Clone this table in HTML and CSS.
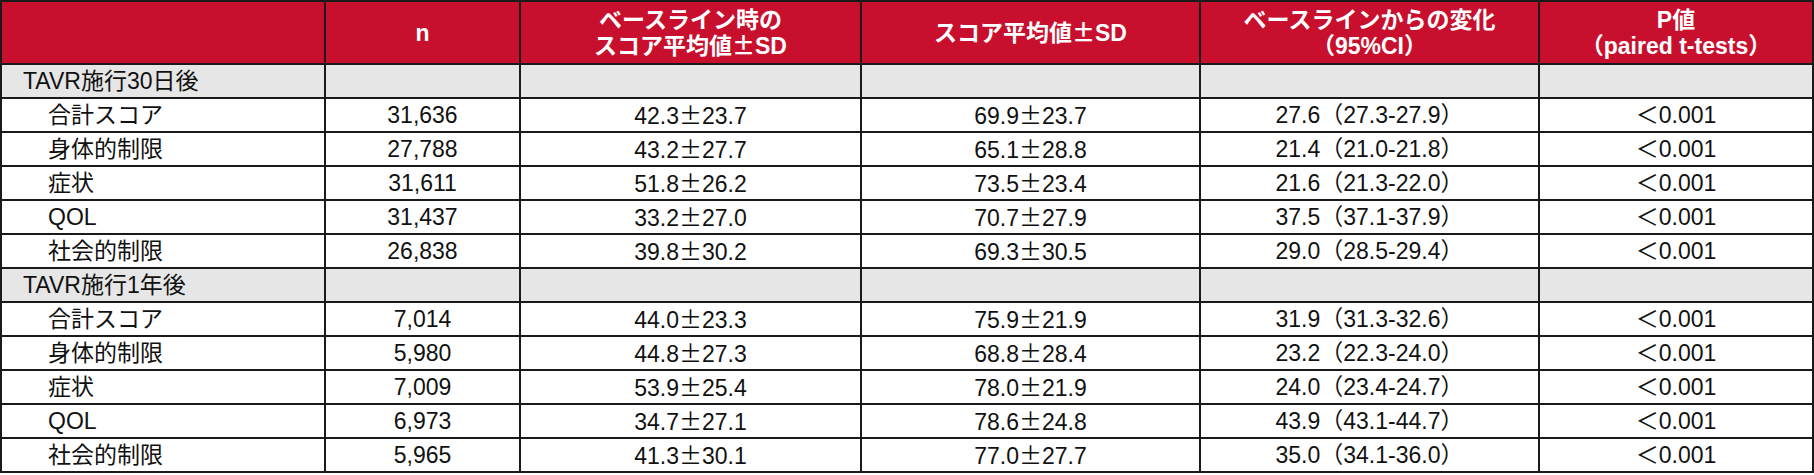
FILE: index.html
```html
<!DOCTYPE html>
<html lang="ja">
<head>
<meta charset="utf-8">
<title>KCCQ</title>
<link rel="stylesheet" href="styles.css">
</head>
<body>
<table class="tbl">
  <colgroup>
    <col class="c1"><col class="c2"><col class="c3"><col class="c4"><col class="c5"><col class="c6">
  </colgroup>
  <thead>
    <tr>
      <th></th>
      <th>n</th>
      <th>ベースライン時の<br>スコア平均値<span class="pm">±</span>SD</th>
      <th>スコア平均値<span class="pm">±</span>SD</th>
      <th>ベースラインからの変化<br>（95%CI）</th>
      <th>P値<br>（paired t-tests）</th>
    </tr>
  </thead>
  <tbody>
    <tr class="group"><td class="lbl">TAVR施行30日後</td><td></td><td></td><td></td><td></td><td></td></tr>
    <tr><td class="sub">合計スコア</td><td>31,636</td><td>42.3<span class="pm">±</span>23.7</td><td>69.9<span class="pm">±</span>23.7</td><td>27.6（27.3-27.9）</td><td>＜0.001</td></tr>
    <tr><td class="sub">身体的制限</td><td>27,788</td><td>43.2<span class="pm">±</span>27.7</td><td>65.1<span class="pm">±</span>28.8</td><td>21.4（21.0-21.8）</td><td>＜0.001</td></tr>
    <tr><td class="sub">症状</td><td>31,611</td><td>51.8<span class="pm">±</span>26.2</td><td>73.5<span class="pm">±</span>23.4</td><td>21.6（21.3-22.0）</td><td>＜0.001</td></tr>
    <tr><td class="sub">QOL</td><td>31,437</td><td>33.2<span class="pm">±</span>27.0</td><td>70.7<span class="pm">±</span>27.9</td><td>37.5（37.1-37.9）</td><td>＜0.001</td></tr>
    <tr><td class="sub">社会的制限</td><td>26,838</td><td>39.8<span class="pm">±</span>30.2</td><td>69.3<span class="pm">±</span>30.5</td><td>29.0（28.5-29.4）</td><td>＜0.001</td></tr>
    <tr class="group"><td class="lbl">TAVR施行1年後</td><td></td><td></td><td></td><td></td><td></td></tr>
    <tr><td class="sub">合計スコア</td><td>7,014</td><td>44.0<span class="pm">±</span>23.3</td><td>75.9<span class="pm">±</span>21.9</td><td>31.9（31.3-32.6）</td><td>＜0.001</td></tr>
    <tr><td class="sub">身体的制限</td><td>5,980</td><td>44.8<span class="pm">±</span>27.3</td><td>68.8<span class="pm">±</span>28.4</td><td>23.2（22.3-24.0）</td><td>＜0.001</td></tr>
    <tr><td class="sub">症状</td><td>7,009</td><td>53.9<span class="pm">±</span>25.4</td><td>78.0<span class="pm">±</span>21.9</td><td>24.0（23.4-24.7）</td><td>＜0.001</td></tr>
    <tr><td class="sub">QOL</td><td>6,973</td><td>34.7<span class="pm">±</span>27.1</td><td>78.6<span class="pm">±</span>24.8</td><td>43.9（43.1-44.7）</td><td>＜0.001</td></tr>
    <tr><td class="sub">社会的制限</td><td>5,965</td><td>41.3<span class="pm">±</span>30.1</td><td>77.0<span class="pm">±</span>27.7</td><td>35.0（34.1-36.0）</td><td>＜0.001</td></tr>
  </tbody>
</table>
</body>
</html>
```

FILE: styles.css
```css
html, body {
  margin: 0;
  padding: 0;
  background: #ffffff;
}

.tbl {
  border-collapse: collapse;
  table-layout: fixed;
  width: 1812px;
  font-family: "Liberation Sans", "Noto Sans CJK JP", sans-serif;
  font-size: 23px;
  color: #111111;
}

.c1 { width: 324px; }
.c2 { width: 195px; }
.c3 { width: 341px; }
.c4 { width: 339px; }
.c5 { width: 339px; }
.c6 { width: 274px; }

.tbl th,
.tbl td {
  border: 2px solid #1a1a1a;
  padding: 0;
  text-align: center;
  vertical-align: middle;
  white-space: nowrap;
}

.tbl th {
  background: #c8102e;
  color: #ffffff;
  font-weight: bold;
  height: 61px;
  line-height: 26px;
}

.tbl td {
  height: 32px;
  line-height: 22px;
}

.group td {
  background: #e6e6e6;
}

.tbl td.lbl {
  text-align: left;
  padding-left: 21px;
}

.tbl td.sub {
  text-align: left;
  padding-left: 46px;
}

.pm {
  font-family: "Noto Sans CJK JP", sans-serif;
  line-height: 1;
}
```
